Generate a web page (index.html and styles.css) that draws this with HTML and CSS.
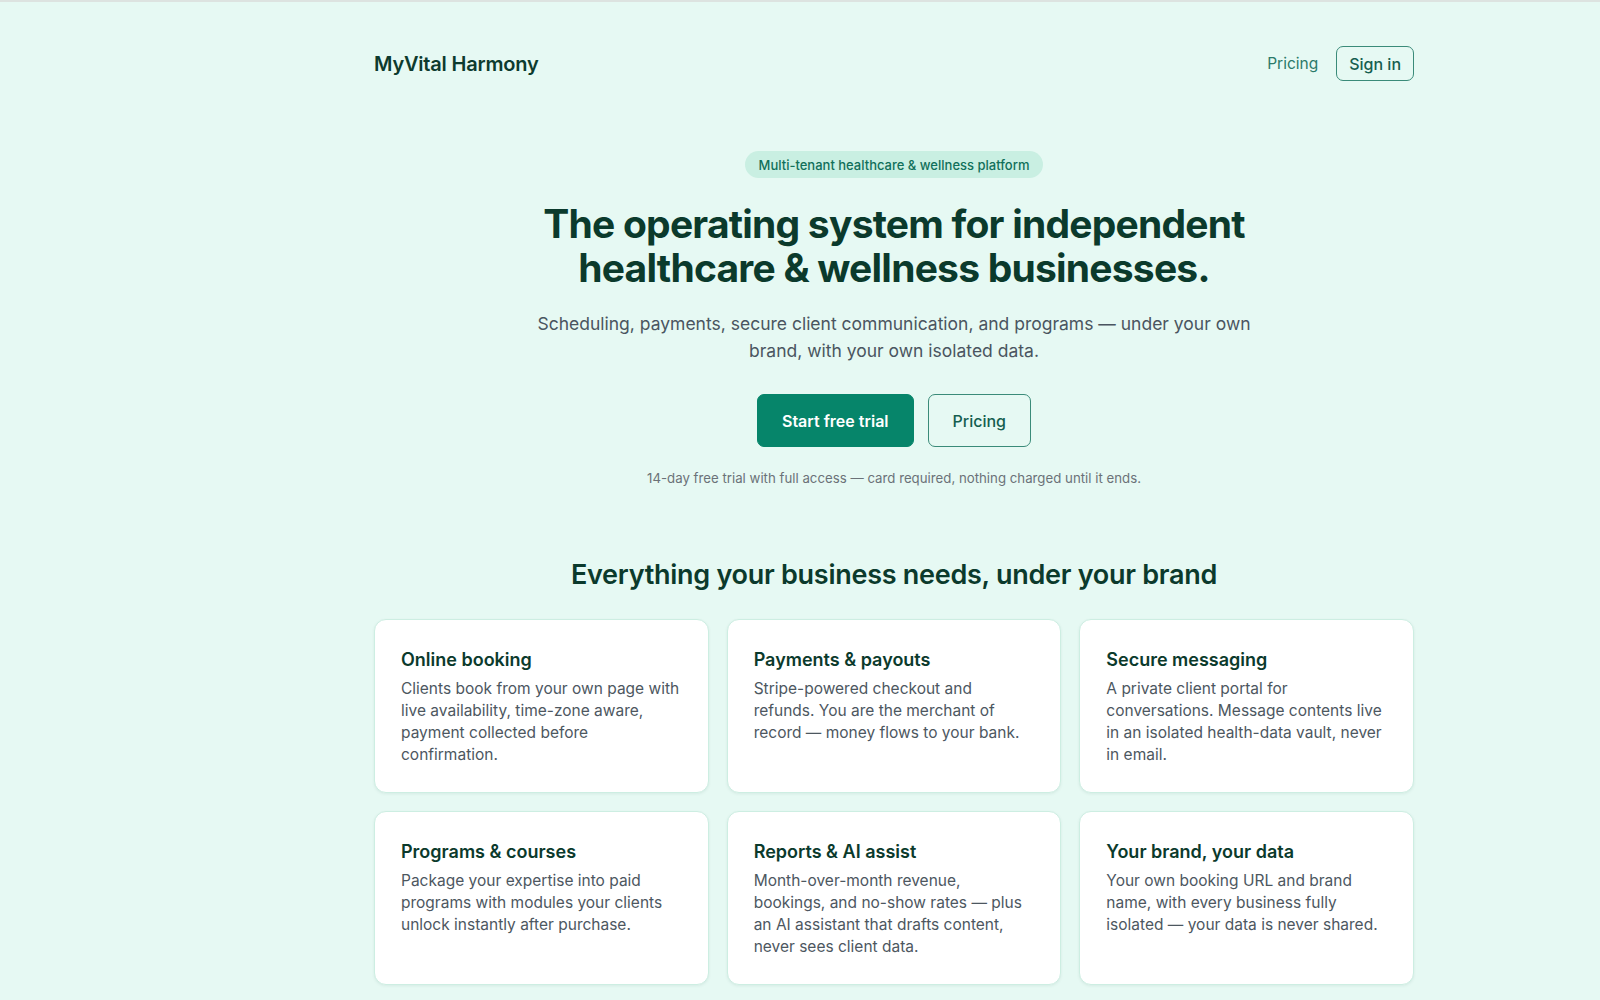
FILE: index.html
```html
<!DOCTYPE html>
<html lang="en">
<head>
<meta charset="utf-8">
<title>MyVital Harmony</title>
<link rel="stylesheet" href="styles.css">
</head>
<body>
<div class="page">
  <div class="container">
    <header class="header">
      <div class="logo">MyVital Harmony</div>
      <nav class="nav">
        <a class="nav-link" href="#">Pricing</a>
        <a class="btn-signin" href="#">Sign in</a>
      </nav>
    </header>

    <section class="hero">
      <span class="badge">Multi-tenant healthcare &amp; wellness platform</span>
      <h1 class="hero-title">The operating system for independent<br>healthcare &amp; wellness businesses.</h1>
      <p class="hero-sub">Scheduling, payments, secure client communication, and programs — under your own brand, with your own isolated data.</p>
      <div class="hero-actions">
        <a class="btn btn-primary" href="#">Start free trial</a>
        <a class="btn btn-outline" href="#">Pricing</a>
      </div>
      <p class="hero-note">14-day free trial with full access — card required, nothing charged until it ends.</p>
    </section>

    <section class="features">
      <h2 class="features-title">Everything your business needs, under your brand</h2>
      <div class="grid">
        <div class="card">
          <h3 class="card-title">Online booking</h3>
          <p class="card-text">Clients book from your own page with live availability, time-zone aware, payment collected before confirmation.</p>
        </div>
        <div class="card">
          <h3 class="card-title">Payments &amp; payouts</h3>
          <p class="card-text">Stripe-powered checkout and refunds. You are the merchant of record — money flows to your bank.</p>
        </div>
        <div class="card">
          <h3 class="card-title">Secure messaging</h3>
          <p class="card-text">A private client portal for conversations. Message contents live in an isolated health-data vault, never in email.</p>
        </div>
        <div class="card">
          <h3 class="card-title">Programs &amp; courses</h3>
          <p class="card-text">Package your expertise into paid programs with modules your clients unlock instantly after purchase.</p>
        </div>
        <div class="card">
          <h3 class="card-title">Reports &amp; AI assist</h3>
          <p class="card-text">Month-over-month revenue, bookings, and no-show rates — plus an AI assistant that drafts content, never sees client data.</p>
        </div>
        <div class="card">
          <h3 class="card-title">Your brand, your data</h3>
          <p class="card-text">Your own booking URL and brand name, with every business fully isolated — your data is never shared.</p>
        </div>
      </div>
    </section>
  </div>
</div>
</body>
</html>
```

FILE: styles.css
```css
* { box-sizing: border-box; }

html, body {
  margin: 0;
  padding: 0;
  background: #e6f9f3;
}

body {
  font-family: Inter, "Noto Sans", "Liberation Sans", sans-serif;
  color: #0d3b2e;
  border-top: 2px solid #dde3e0;
  min-height: 1000px;
}

a { text-decoration: none; }

.page {
  padding-left: 188px;
}

.container {
  max-width: 1040px;
  margin: 0 auto;
}

.header {
  display: flex;
  align-items: center;
  justify-content: space-between;
  padding-top: 44px;
}

.logo {
  font-size: 20px;
  font-weight: 600;
  color: #0d3b2e;
  letter-spacing: -0.01em;
}

.nav {
  display: flex;
  align-items: center;
  gap: 18px;
}

.nav-link {
  font-size: 15.5px;
  color: #2b7a69;
}

.btn-signin {
  font-size: 16px;
  font-weight: 500;
  line-height: 24px;
  color: #155e4f;
  border: 1.5px solid #3a8b79;
  border-radius: 7px;
  padding: 4.5px 12px;
}

.hero {
  display: flex;
  flex-direction: column;
  align-items: center;
  text-align: center;
  padding-top: 70px;
}

.badge {
  display: inline-block;
  font-size: 13px;
  font-weight: 500;
  line-height: 18px;
  padding: 4.5px 14px;
  border-radius: 999px;
  background: #c9efe2;
  color: #11705a;
}

.hero-title {
  margin: 24px 0 0;
  font-size: 39px;
  line-height: 44px;
  font-weight: 700;
  letter-spacing: -0.02em;
  color: #0b3a2c;
}

.hero-sub {
  margin: 20px 0 0;
  max-width: 740px;
  font-size: 17.5px;
  line-height: 27px;
  color: #4a5560;
}

.hero-actions {
  display: flex;
  gap: 14px;
  margin-top: 30px;
}

.btn {
  display: inline-block;
  font-size: 16px;
  font-weight: 600;
  line-height: 24px;
  padding: 13.5px 24px;
  border-radius: 7px;
  border: 1px solid transparent;
}

.btn-primary {
  background: #06856a;
  border-color: #06856a;
  color: #ffffff;
}

.btn-outline {
  background: transparent;
  border-color: #3a8b79;
  color: #155e4f;
  font-weight: 500;
}

.hero-note {
  margin: 21px 0 0;
  font-size: 13.25px;
  line-height: 20px;
  color: #6b7278;
}

.features {
  padding-top: 69px;
}

.features-title {
  margin: 0;
  text-align: center;
  font-size: 27px;
  line-height: 36px;
  font-weight: 600;
  letter-spacing: -0.01em;
  color: #0b3a2c;
}

.grid {
  display: grid;
  grid-template-columns: repeat(3, 1fr);
  gap: 18px 18px;
  margin-top: 26px;
}

.card {
  background: #ffffff;
  border: 1px solid #cdeee2;
  border-radius: 12px;
  padding: 28px 28px 26px 26px;
  box-shadow: 0 1px 3px rgba(16, 80, 60, 0.08);
}

.card-title {
  margin: 0 0 6px;
  font-size: 18px;
  line-height: 24px;
  font-weight: 600;
  color: #0b3a2c;
}

.card-text {
  margin: 0;
  font-size: 15.5px;
  line-height: 22px;
  color: #4d575f;
}
```
